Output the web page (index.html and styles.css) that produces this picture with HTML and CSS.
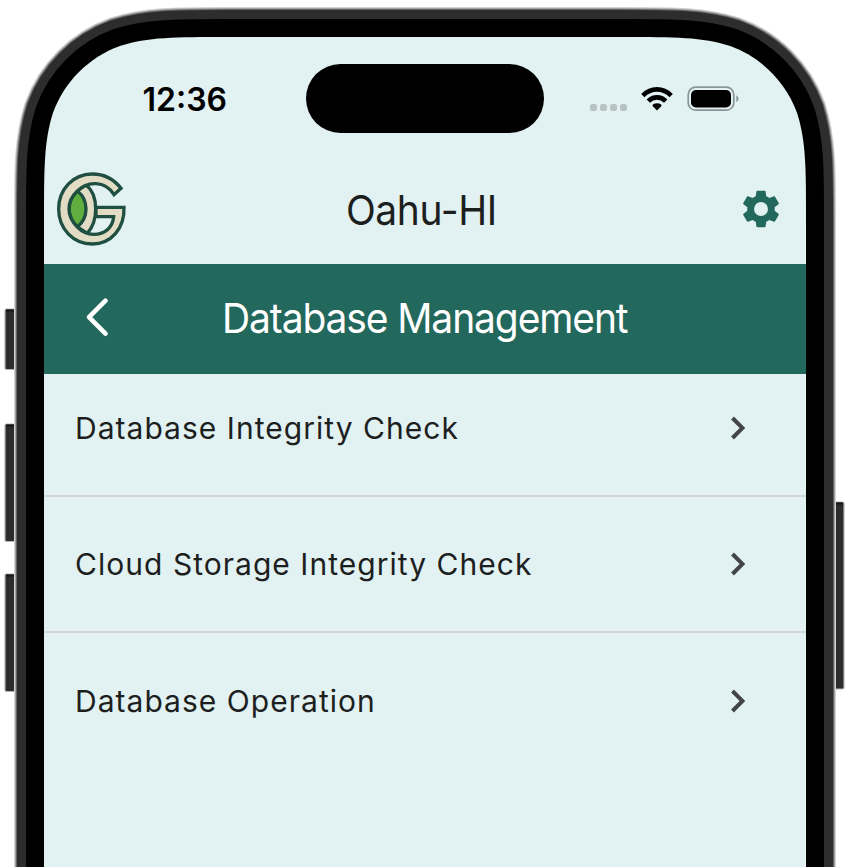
FILE: index.html
```
<!DOCTYPE html>
<html lang="en">
<head>
<meta charset="utf-8">
<title>Database Management</title>
<link rel="stylesheet" href="styles.css">
</head>
<body>
<div class="phone">
  <svg class="frame" viewBox="0 0 857 867" aria-hidden="true">
    <defs>
      <path id="shell" d="M44 950V220.4C44 167.6 44 141.2 53 112.8C64.3 81.7 88.7 57.3 119.8 46C148.2 37 174.6 37 227.4 37H622.6C675.4 37 701.8 37 730.2 46C761.3 57.3 785.7 81.7 797 112.8C806 141.2 806 167.6 806 220.4V950"/>
    </defs>
    <g class="buttons">
      <rect x="5" y="309" width="14" height="60.5" rx="1.5"/>
      <rect x="5" y="424" width="14" height="117.5" rx="1.5"/>
      <rect x="5" y="574" width="14" height="117.5" rx="1.5"/>
      <rect x="830" y="502" width="14" height="187" rx="1.5"/>
    </g>
    <g class="button-tops">
      <path d="M6 310.5h10M6 425.5h10M6 575.5h10M835 503.5h8"/>
    </g>
    <use href="#shell" class="edge-light"/>
    <use href="#shell" class="edge-mid"/>
    <use href="#shell" class="edge-dark"/>
    <use href="#shell" class="band"/>
    <use href="#shell" class="bezel"/>
    <use href="#shell" class="glass"/>
  </svg>

  <main class="screen">
    <div class="status">
      <span class="time">12:36</span>
      <span class="island"></span>
      <span class="signals">
        <span class="dots"><i></i><i></i><i></i><i></i></span>
        <svg class="wifi" viewBox="0 0 32 24">
          <g fill="none" stroke="#000" stroke-width="4.6">
            <path d="M1.8 8.6Q8 2.4 16 2.4T30.2 8.6"/>
            <path d="M7.3 14.2Q11 10.4 16 10.4T24.7 14.2"/>
          </g>
          <path d="M16 23.6L11.5 19Q11.4 16.3 16 16.3T20.5 19Z"/>
        </svg>
        <svg class="battery" viewBox="0 0 52 26">
          <rect x="1.2" y="1.2" width="45.6" height="23" rx="7.5" fill="none" stroke="#8d9696" stroke-width="1.7"/>
          <rect x="4" y="4" width="40" height="17.5" rx="5"/>
          <path d="M49.3 9.3Q51.6 10.4 51.6 12.7T49.3 16.1Z" fill="#8d9696"/>
        </svg>
      </span>
    </div>

    <header class="header">
      <svg class="logo" viewBox="36 22 210 222">
        <g stroke="#1f4f40" stroke-width="10" stroke-linejoin="miter">
          <path fill="#e3dcc5" d="M97 79L123 61C143 76 152 103 152 133C152 163 144 187 127 206L97 187Z"/>
          <path fill="#5fae3e" d="M97 79C82 93 72 110 72 133C72 155 82 172 97 187C114 173 123 155 123 133C123 110 114 92 97 79Z"/>
          <path fill="#e3dcc5" d="M228 71C207 44 176 28 142 28C84 28 41 74 41 133C41 192 84 238 142 238C198 238 239 192 237 128H153V156H206C203 188 181 209 146 209C126 209 110 200 97 187C82 172 72 155 72 133C72 110 82 93 97 79C127 49 180 47 207 90Z"/>
        </g>
      </svg>
      <h1 class="site">Oahu-HI</h1>
      <svg class="gear" viewBox="0 0 24 24"><path fill-rule="evenodd" d="M19.43 12.98c.04-.32.07-.64.07-.98s-.03-.66-.07-.98l2.11-1.65c.19-.15.24-.42.12-.64l-2-3.46c-.12-.22-.39-.3-.61-.22l-2.49 1c-.52-.4-1.08-.73-1.69-.98l-.38-2.65C14.46 2.18 14.25 2 14 2h-4c-.25 0-.46.18-.49.42l-.38 2.65c-.61.25-1.17.59-1.69.98l-2.49-1c-.23-.09-.49 0-.61.22l-2 3.46c-.13.22-.07.49.12.64l2.11 1.65c-.04.32-.07.65-.07.98s.03.66.07.98l-2.11 1.65c-.19.15-.24.42-.12.64l2 3.46c.12.22.39.3.61.22l2.49-1c.52.4 1.08.73 1.69.98l.38 2.65c.03.24.24.42.49.42h4c.25 0 .46-.18.49-.42l.38-2.65c.61-.25 1.17-.59 1.69-.98l2.49 1c.23.09.49 0 .61-.22l2-3.46c.12-.22.07-.49-.12-.64l-2.11-1.65zM12 15.8a3.8 3.8 0 1 1 0-7.6a3.8 3.8 0 0 1 0 7.6z"/></svg>
    </header>

    <div class="titlebar">
      <svg class="back" viewBox="0 0 24 40"><path d="M20.5 3.7L4 20.2L20.5 36.7"/></svg>
      <h2 class="title">Database Management</h2>
    </div>

    <ul class="list">
      <li class="row"><span class="label">Database Integrity Check</span><svg class="chev" viewBox="0 0 18 26"><path d="M3.5 3L13.5 13L3.5 23"/></svg></li>
      <li class="row"><span class="label">Cloud Storage Integrity Check</span><svg class="chev" viewBox="0 0 18 26"><path d="M3.5 3L13.5 13L3.5 23"/></svg></li>
      <li class="row"><span class="label">Database Operation</span><svg class="chev" viewBox="0 0 18 26"><path d="M3.5 3L13.5 13L3.5 23"/></svg></li>
    </ul>
  </main>
</div>
</body>
</html>
```
FILE: styles.css
```
* { box-sizing: border-box; }
body { margin: 0; background: #fff; font-family: Inter, "Liberation Sans", sans-serif; overflow: hidden; }
h1, h2, ul { margin: 0; padding: 0; font-weight: 400; list-style: none; }
svg { display: block; flex: none; }

.phone { position: relative; width: 857px; height: 867px; padding: 37px 51px 0 44px; overflow: hidden; }
.frame { position: absolute; inset: 0; width: 857px; height: 867px; }
.frame use { fill: none; }
.buttons rect { fill: #2d2d2d; stroke: #b5b5b5; stroke-width: 1.2; }
.button-tops path { stroke: #161616; stroke-width: 2; }
.frame .edge-light { stroke: #d2d2d2; stroke-width: 60; }
.frame .edge-mid { stroke: #a2a2a2; stroke-width: 58; }
.frame .edge-dark { stroke: #666; stroke-width: 56; }
.frame .band { stroke: #2d2d2d; stroke-width: 54; }
.frame .bezel { stroke: #000; stroke-width: 36; }
.frame .glass { fill: #e2f1f1; }

.screen { position: relative; display: flex; flex-direction: column; width: 762px; }

.status { display: grid; grid-template-columns: 262px 238px 262px; align-items: center; height: 122px; }
.time { padding: 3px 0 0 98.5px; font-size: 32px; font-weight: 600; line-height: 40px; color: #000; }
.island { height: 69.5px; margin-top: 1px; border-radius: 35px; background: #000; }
.signals { display: flex; align-items: center; padding: 1px 0 0 46px; }
.dots { display: flex; gap: 3px; padding-top: 17px; }
.dots i { width: 7px; height: 7px; border-radius: 2.5px; background: #b7c2c2; }
.wifi { width: 32px; height: 24px; margin-left: 14px; }
.battery { width: 52px; height: 26px; margin-left: 14px; }

.header { display: flex; align-items: center; justify-content: space-between; height: 105.4px; padding: 0 23.5px 6px 13px; }
.logo { width: 70px; height: 74px; margin-top: 1px; }
.site { margin-right: 22px; padding-top: 2px; font-size: 41px; line-height: 50px; letter-spacing: -0.4px; color: #1d1f1f; transform: scaleX(.95); }
.gear { width: 44px; height: 44px; margin-top: 1px; fill: #23685c; }

.titlebar { display: flex; align-items: center; height: 110px; padding-left: 41px; background: #23685c; color: #fff; }
.back { width: 24px; height: 40px; margin-top: -4px; }
.back path { fill: none; stroke: #fff; stroke-width: 4.6; stroke-linecap: round; stroke-linejoin: round; }
.title { margin: -2px 0 0 112.5px; font-size: 41px; line-height: 50px; letter-spacing: -1.15px; white-space: nowrap; transform: scaleX(.95); transform-origin: left; }

.row { display: flex; align-items: center; justify-content: space-between; height: 136.4px; padding: 0 59px 0 31px; border-bottom: 2px solid #d3d6d6; }
.row:first-child { height: 122.4px; padding-bottom: 13px; }
.row:last-child { border-bottom: 0; }
.label { font-size: 30px; line-height: 40px; letter-spacing: 1.03px; color: #1d1f1f; white-space: nowrap; }
.chev { width: 18px; height: 26px; }
.chev path { fill: none; stroke: #414545; stroke-width: 3.9; }
```
